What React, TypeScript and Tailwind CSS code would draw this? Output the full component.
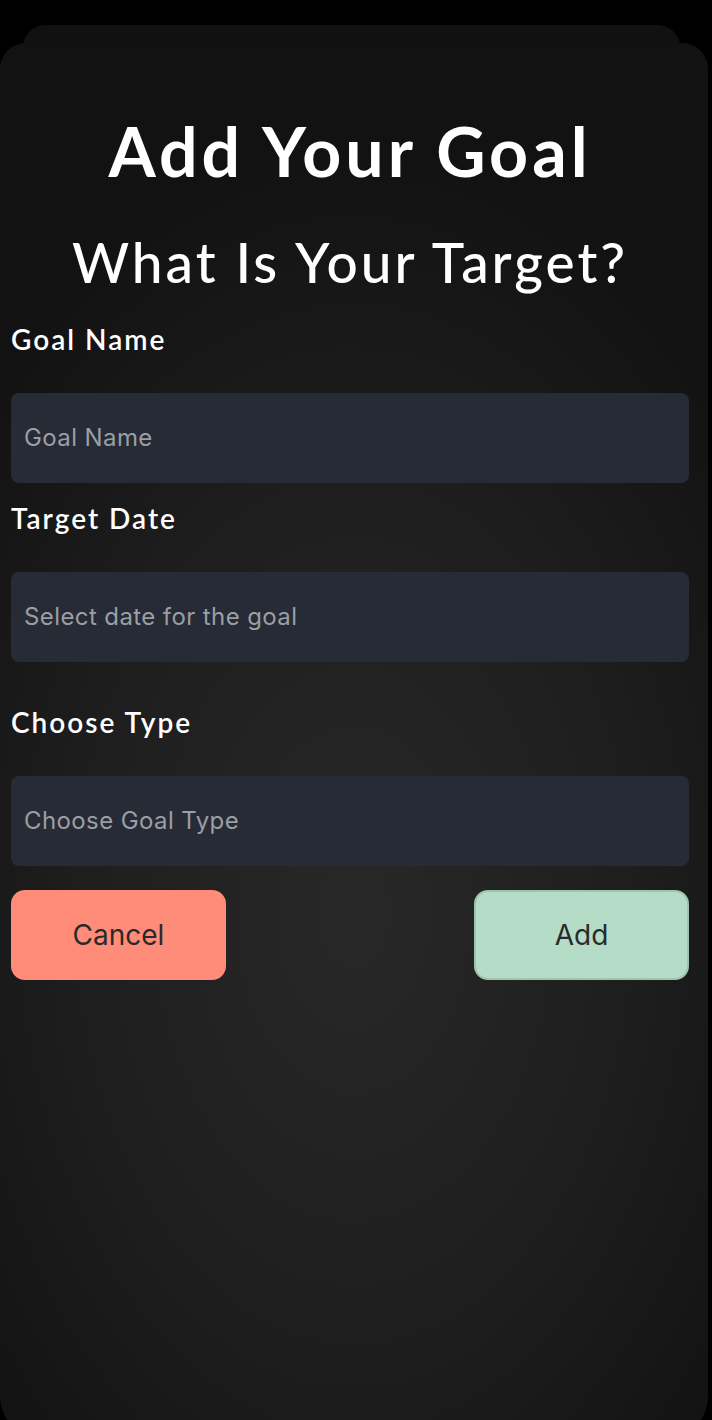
import React from "react";

const heading = { fontFamily: "Lato, 'Noto Sans', sans-serif" };
const body = { fontFamily: "Inter, Roboto, 'Noto Sans', sans-serif" };

function Field({ label, placeholder, gap }: { label: string; placeholder: string; gap: string }) {
  return (
    <div className={gap}>
      <div className="text-[28px] font-semibold text-white leading-none h-[27px] tracking-[2px]" style={heading}>
        {label}
      </div>
      <div
        className="mt-[41px] h-[90px] rounded-[8px] bg-[#272b35] flex items-center px-[13px] text-[24px] tracking-[0.4px] text-[#9b9ea4]"
        style={body}
      >
        {placeholder}
      </div>
    </div>
  );
}

export default function App() {
  return (
    <div className="relative w-[712px] h-[1420px] bg-black overflow-hidden">
      <div className="absolute top-[25px] left-[23px] w-[657px] h-[60px] rounded-t-[22px] bg-[#111111]" />
      <div className="relative mt-[43px] w-[708px] h-[1400px] rounded-t-[26px] rounded-b-[48px] bg-[radial-gradient(ellipse_70%_55%_at_50%_62%,#282828_0%,#1e1e1e_55%,#121212_100%)]">
        <div className="pl-[11px] pr-[19px] pt-[74px]">
          <h1 className="text-center text-[68px] font-bold text-white leading-none tracking-[4px]" style={heading}>
            Add Your Goal
          </h1>
          <h2 className="mt-[50px] text-center text-[55px] font-medium text-white leading-none tracking-[3px]" style={heading}>
            What Is Your Target?
          </h2>
          <div className="mt-[35px]">
            <Field label="Goal Name" placeholder="Goal Name" gap="" />
            <Field label="Target Date" placeholder="Select date for the goal" gap="mt-[21px]" />
            <Field label="Choose Type" placeholder="Choose Goal Type" gap="mt-[46px]" />
          </div>
          <div className="mt-[24px] flex justify-between">
            <button
              className="w-[215px] h-[90px] rounded-[14px] bg-[#ff8c78] text-[28px] text-[#2a2a2a]"
              style={body}
            >
              Cancel
            </button>
            <button
              className="w-[215px] h-[90px] rounded-[14px] bg-[#b4dcc6] border-2 border-[#9fc3ae] text-[28px] text-[#2a2a2a]"
              style={body}
            >
              Add
            </button>
          </div>
        </div>
      </div>
    </div>
  );
}
